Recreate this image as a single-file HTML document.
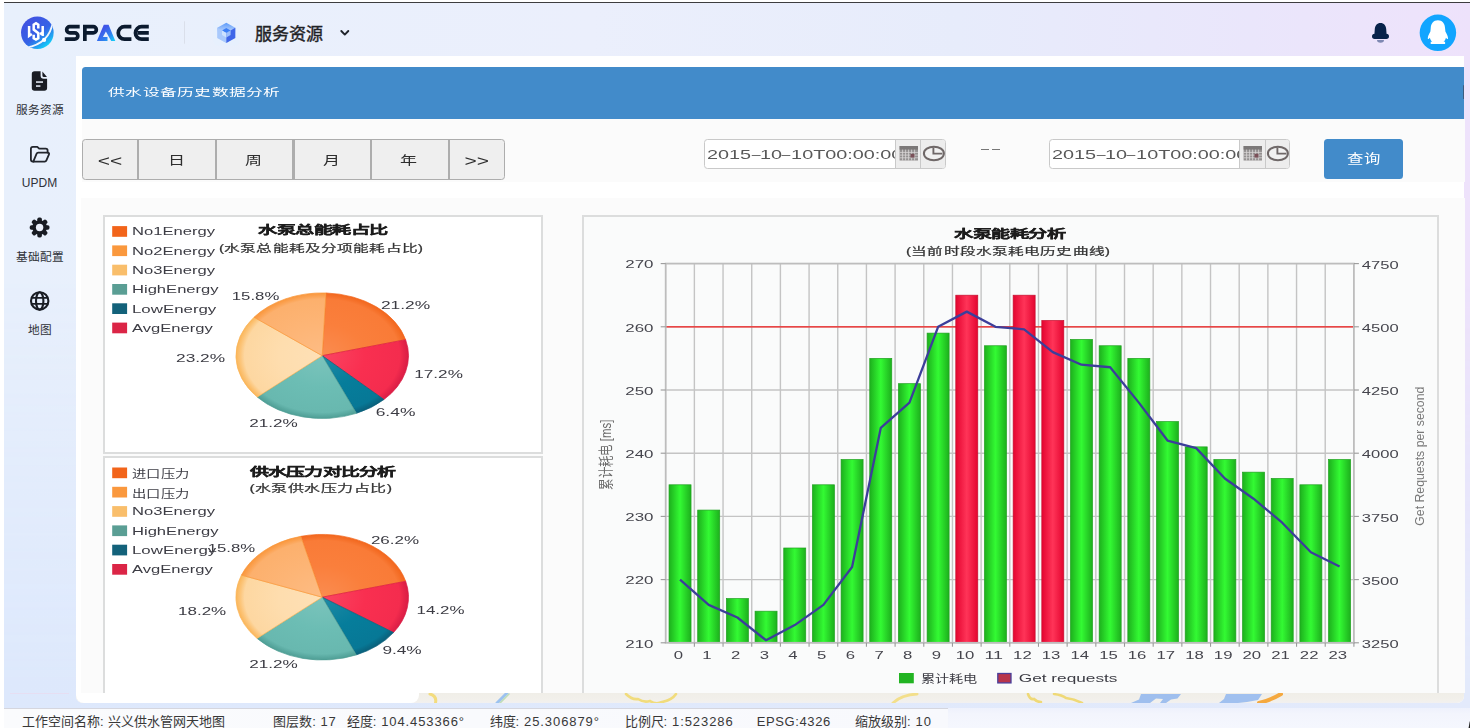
<!DOCTYPE html>
<html lang="zh-CN">
<head>
<meta charset="utf-8">
<title>SPACE - 供水设备历史数据分析</title>
<style>
html,body{margin:0;padding:0;}
body{width:1474px;height:728px;overflow:hidden;background:#fff;position:relative;font-family:"Liberation Sans",sans-serif;color:#333;}
.abs{position:absolute;}
#app{position:absolute;left:4px;top:2px;width:1466px;height:726px;border-top:1px solid #3d3d3f;box-sizing:border-box;
 background:linear-gradient(90deg,#E8F0FC 0%,#EBEFFC 40%,#E7ECFB 65%,#EAE6FB 85%,#EEE2FB 100%);overflow:hidden;}
#sideshade{position:absolute;left:0;top:0;width:1466px;height:726px;background:linear-gradient(90deg,#DDE8FC 0%,#E3EAFB 100%);-webkit-mask-image:linear-gradient(180deg,rgba(0,0,0,0) 38%,rgba(0,0,0,1) 94%);mask-image:linear-gradient(180deg,rgba(0,0,0,0) 38%,rgba(0,0,0,1) 94%);}
/* everything below is positioned in page coordinates inside #page */
#page{position:absolute;left:0;top:0;width:1474px;height:728px;}
.navtxt{position:absolute;font-size:11.7px;line-height:14px;color:#2f3238;text-align:center;width:72px;left:3.5px;white-space:nowrap;}
#hdtitle{position:absolute;left:254.5px;top:23px;font-size:17px;line-height:24px;color:#1f2226;letter-spacing:0.15px;font-weight:500;-webkit-text-stroke:0.4px #1f2226;white-space:nowrap;}
#main{position:absolute;left:76px;top:56px;width:1388.2px;height:647px;background:#fff;border-radius:0 0 7px 7px;overflow:hidden;}
#mapstrip{position:absolute;left:0;top:637.4px;width:1389px;height:9.6px;background:linear-gradient(180deg,#F0EEE8 0%,#F2F0EB 70%,#F1F0F0 100%);}
#layerpanel{position:absolute;left:0;top:630px;width:342.5px;height:17px;background:#fff;border-radius:0 0 8px 8px;}
#bluebar{position:absolute;left:82px;top:66.7px;width:1382px;height:52.2px;background:#428BCA;border-radius:3.5px 0 0 0;}
#bluebar span{position:absolute;left:26px;top:17.8px;font-size:10.7px;line-height:16px;color:#fff;white-space:nowrap;transform:scaleX(1.57);transform-origin:0 50%;}
#toolbar{position:absolute;left:82px;top:118.9px;width:1383px;height:63.1px;background:#FBFBFB;}
#panel{position:absolute;left:80.8px;top:197.8px;width:1384.2px;height:495.4px;background:#FBFBFB;}
#btns{position:absolute;left:82.3px;top:139.3px;width:422.9px;height:40.3px;box-sizing:border-box;border:1.4px solid #ADADAD;border-radius:3.5px;background:#EFEFEF;}
#btns i{position:absolute;top:0;width:2.2px;height:100%;background:#ADADAD;}
#btns b{position:absolute;top:12.3px;font-weight:normal;font-size:12.5px;line-height:16px;color:#2e2e2e;white-space:nowrap;text-align:center;transform:scaleX(1.36);}
#btns b.ar{font-size:15.4px;top:12.6px;}
.inp{position:absolute;top:139px;height:30px;width:241.6px;box-sizing:border-box;border:1.2px solid #C9C9C9;border-radius:3.5px;background:#fff;overflow:hidden;}
.inp .tx{position:absolute;left:2.2px;top:6.2px;font-size:13.3px;line-height:17px;color:#585858;white-space:nowrap;transform:scaleX(1.49);transform-origin:0 50%;}
.dh{display:inline-block;width:6.04px;transform:scaleX(0.8);transform-origin:0 50%;}
.inp .ad{position:absolute;top:0;height:100%;background:#EDEDED;border-left:1.2px solid #C9C9C9;box-sizing:border-box;}
#dash{position:absolute;left:980.9px;top:148.6px;width:19.4px;height:1.2px;}
#dash:before,#dash:after{content:"";position:absolute;top:0;width:8.5px;height:1.2px;background:#777;}
#dash:before{left:0;}#dash:after{right:0;}
#qbtn{position:absolute;left:1324.3px;top:138.9px;width:79.2px;height:40px;background:#428BCA;border-radius:3.5px;}
#qbtn span{position:absolute;left:0;width:100%;top:12.5px;text-align:center;font-size:12.6px;line-height:16px;color:#fff;transform:scaleX(1.3);}
.box{position:absolute;box-sizing:border-box;border:2px solid #DCDDDD;background:#fff;}
#status{position:absolute;left:4px;top:708.3px;width:1466px;height:19.7px;background:linear-gradient(180deg,#EEF1FC 0%,#F3F5FD 30%,#F5F7FE 100%);}
#status i{position:absolute;left:0;top:0;width:944px;height:19.7px;background:linear-gradient(90deg,#FAFBFD,#F8F9FD);border-top:1px solid #D5D6DE;box-sizing:border-box;}
#status span{position:absolute;top:5.9px;font-size:13px;line-height:16px;color:#383838;white-space:nowrap;}
#status span.v{letter-spacing:0.9px;}
svg{position:absolute;left:0;top:0;overflow:visible;}
svg text{font-family:"Liberation Sans",sans-serif;}
#charts{filter:blur(0.4px);}
#bluebar span,#btns b,.inp .tx,#qbtn span{filter:blur(0.3px);}
.ct{font-size:11.8px;fill:#3c3c44;}
.cc{font-size:10.9px;fill:#3c3c44;}
.ax{font-size:11.4px;fill:#45454d;}
.gl{stroke:#C4C4C4;stroke-width:1.4;}
.tk{stroke:#9A9A9A;stroke-width:1.1;}
.tb{font-size:11.4px;font-weight:bold;fill:#1c1c1c;stroke:#1c1c1c;stroke-width:0.3px;}
.ts{font-size:10.7px;fill:#333;stroke:#333;stroke-width:0.22px;}
</style>
</head>
<body>
<div id="app"><div id="sideshade"></div></div>
<div id="page">

<!-- ===== header ===== -->
<svg width="1474" height="60" viewBox="0 0 1474 60">
 <defs>
  <linearGradient id="lg1" x1="0.2" y1="0.15" x2="0.85" y2="0.95">
   <stop offset="0" stop-color="#4054E2"/><stop offset="0.5" stop-color="#3563E6"/><stop offset="0.8" stop-color="#1FA8F2"/><stop offset="1" stop-color="#0BE6FB"/>
  </linearGradient>
  <linearGradient id="lgA" x1="0" y1="0" x2="1" y2="1">
   <stop offset="0.3" stop-color="#3F55E7"/><stop offset="0.65" stop-color="#2F7FEF"/><stop offset="1" stop-color="#12D4F8"/>
  </linearGradient>
  <linearGradient id="cubeTop" x1="0" y1="0" x2="0" y2="1"><stop offset="0" stop-color="#5A9AFA"/><stop offset="0.5" stop-color="#C6DBFD"/><stop offset="1" stop-color="#C6DBFD"/></linearGradient>
  <clipPath id="lc"><circle cx="37.35" cy="32.75" r="16.3"/></clipPath>
 </defs>
 <!-- logo -->
 <circle cx="37.35" cy="32.75" r="16.3" fill="url(#lg1)"/>
 <g clip-path="url(#lc)">
  <path d="M52.9,21.5 Q49.6,43.6 26.5,47.6" fill="none" stroke="#F1F5FD" stroke-width="1.7"/>
 </g>
 <circle cx="44.1" cy="39.9" r="2.1" fill="#fff"/>
 <g fill="none" stroke="#fff" stroke-width="2.5" stroke-linejoin="miter">
  <path d="M29.1,26 V35.8 L31.8,34"/>
  <path d="M42.7,26 V36 M42.7,32.4 L40,34.2"/>
  <path d="M38.3,28.4 V24.7 L36,23.3 L33.7,24.7 V29.6 L38.3,33.2 V38.2 L36,39.6 L33.7,38.2 V34.8"/>
 </g>
 <!-- SPACE word -->
 <g fill="none" stroke="#0B1A2E" stroke-width="3.7">
  <path d="M79.7,26.65 H69.8 a3.125,3.125 0 0 0 0,6.25 H74.7 a3.125,3.125 0 0 1 0,6.25 H64.8"/>
  <path d="M84.85,41 V26.65 H93.2 a3.125,3.125 0 0 1 0,6.25 H84.85"/>
  <path d="M131.4,26.65 H124.5 a6.25,6.25 0 0 0 0,12.5 H131.4"/>
  <path d="M148.8,26.65 H141.7 a6.25,6.25 0 0 0 0,12.5 H148.8 M137.6,32.9 H148.8"/>
 </g>
 <path d="M103.8,24.8 H108.6 L115.3,41 H111.2 L105.9,31.5 L102.9,37.1 H107.5 V41 H96.9 Z" fill="url(#lgA)"/>
 <!-- divider -->
 <rect x="184" y="21.3" width="1" height="22.4" fill="#DADFEA"/>
 <!-- cube icon -->
 <rect x="213.4" y="19.2" width="26.2" height="26.5" rx="5" fill="#E7F0FD"/>
 <path d="M226.3,22.7 L235.3,27.8 V37.9 L226.3,43 L217.3,37.9 V27.8 Z" fill="url(#cubeTop)"/>
 <path d="M217.3,27.8 L226.3,32.9 V43 L217.3,37.9 Z" fill="#A9C9FC"/>
 <path d="M226.3,32.9 L235.3,27.8 V37.9 L226.3,43 Z" fill="#3F66E8"/>
 <path d="M226.3,28 L230.6,30.4 L226.3,32.9 L222,30.4 Z" fill="#3C7FF7"/>
 <path d="M222,30.4 L226.3,32.9 V37.4 L222,35 Z" fill="#CDE2FE"/>
 <path d="M226.3,32.9 L230.6,30.4 V35 L226.3,37.4 Z" fill="#9DBFFB"/>
 <!-- chevron -->
 <path d="M341.3,31 L344.8,34.6 L348.3,31" fill="none" stroke="#20242B" stroke-width="1.9" stroke-linecap="round" stroke-linejoin="round"/>
 <!-- bell -->
 <path d="M1380.5,22.9 c3.5,0 5.5,2.6 5.7,6.2 l0.35,4.6 h-0.2 a2.65,2.65 0 0 1 0,5.3 h-11.7 a2.65,2.65 0 0 1 0,-5.3 h-0.2 l0.35,-4.6 c0.2,-3.6 2.2,-6.2 5.7,-6.2 z" fill="#08234A"/>
 <path d="M1377,40.1 h7 a3.5,2.6 0 0 1 -7,0 z" fill="#7E88B2"/>
 <!-- avatar -->
 <circle cx="1437.9" cy="32.85" r="18.25" fill="#12A5FF"/>
 <path d="M1437.9,20.3 c4.4,0 7,3.3 7.2,8.2 l0.3,3 c1.5,2.6 2.7,5.2 2.6,7 c-0.1,1 -0.9,0.6 -2.1,-0.8 c-0.3,1.7 -1.2,3 -2.3,4 h1.5 v2.2 h-14.4 v-2.2 h1.5 c-1.1,-1 -2,-2.3 -2.3,-4 c-1.2,1.4 -2,1.8 -2.1,0.8 c-0.1,-1.8 1.1,-4.4 2.6,-7 l0.3,-3 c0.2,-4.9 2.8,-8.2 7.2,-8.2 z" fill="#fff"/>
</svg>
<div id="hdtitle">服务资源</div>

<!-- ===== sidebar ===== -->
<svg width="80" height="340" viewBox="0 0 80 340">
 <!-- file icon -->
 <path d="M34.6,71.3 H40.6 V75.6 a3.2,3.2 0 0 0 3.2,3.2 H47.1 V88 a2.8,2.8 0 0 1 -2.8,2.8 H34.6 a2.8,2.8 0 0 1 -2.8,-2.8 V74.1 a2.8,2.8 0 0 1 2.8,-2.8 Z" fill="#191C23"/>
 <path d="M42.4,71.5 L47,76.9 H43.9 a1.5,1.5 0 0 1 -1.5,-1.5 Z" fill="#191C23"/>
 <rect x="36" y="81.3" width="7" height="1.5" fill="#EAF0FB"/>
 <rect x="36" y="85.3" width="4.4" height="1.5" fill="#EAF0FB"/>
 <!-- folder icon -->
 <g fill="none" stroke="#22252C" stroke-width="1.8" stroke-linejoin="round" stroke-linecap="round">
  <path d="M33.6,161.6 H32.9 a2,2 0 0 1 -2,-2 V148.8 a2,2 0 0 1 2,-2 H37.3 L39.2,148.7 H45.8 a1.8,1.8 0 0 1 1.8,1.8 V152.6"/>
  <path d="M33.3,161.6 L36.5,153.9 a1.9,1.9 0 0 1 1.7,-1.2 H48 a1.1,1.1 0 0 1 1,1.6 L46.4,160.4 a1.9,1.9 0 0 1 -1.7,1.2 Z"/>
 </g>
 <!-- gear icon -->
 <g transform="translate(39.6,227.5)" fill="#191C23">
  <circle r="7.3"/>
  <g id="teeth">
   <rect x="-2.3" y="-9.9" width="4.6" height="19.8" rx="1.7"/>
   <rect x="-2.3" y="-9.9" width="4.6" height="19.8" rx="1.7" transform="rotate(45)"/>
   <rect x="-2.3" y="-9.9" width="4.6" height="19.8" rx="1.7" transform="rotate(90)"/>
   <rect x="-2.3" y="-9.9" width="4.6" height="19.8" rx="1.7" transform="rotate(135)"/>
  </g>
  <circle r="3.7" fill="#EBF0FB"/>
 </g>
 <!-- globe icon -->
 <g transform="translate(39.7,300.9)" fill="none" stroke="#191C23" stroke-width="2.1">
  <circle r="8.7"/>
  <ellipse rx="3.7" ry="8.7"/>
  <path d="M-8.2,-3 H8.2 M-8.2,3 H8.2" stroke-width="1.9"/>
 </g>
</svg>
<div class="navtxt" style="top:103.3px;">服务资源</div>
<div class="navtxt" style="top:175.6px;font-size:12px;">UPDM</div>
<div class="navtxt" style="top:249.9px;">基础配置</div>
<div class="navtxt" style="top:323.4px;">地图</div>

<div class="abs" style="left:10px;top:692.6px;width:59px;height:1px;background:#E6DEF2;"></div>
<!-- ===== main panel ===== -->
<div id="main">
 <div id="mapstrip"></div>
 <svg width="1389" height="647" viewBox="76 56 1389 647">
  <g fill="none" stroke-linecap="round">
   <path d="M430,694 q7,2 5.5,9" stroke="#F3DC7E" stroke-width="3"/>
   <path d="M497,703 l10,-10" stroke="#9CC2F0" stroke-width="3"/><path d="M500,703 l9,-9" stroke="#BFDDB8" stroke-width="1.6"/>
   <path d="M626,694 q6,6 12,5 q6,4 12,2 q6,4 12,1 q10,-2 14,-8" stroke="#F1DC7C" stroke-width="2.6"/>
   <path d="M893,703 q8,-8 24,-9" stroke="#F3DF8B" stroke-width="3"/>
   <path d="M1028,694 q2,6 6,5 q3,3 7,3 M1054,694 q8,1 12,4 q8,1 16,5" stroke="#EFD977" stroke-width="2.6"/>
   <path d="M1259,703 q12,-3 22,-9" stroke="#F5A93F" stroke-width="4"/>
  </g>
  <path d="M1131,703 L1139,699.5 L1141,694 H1181 L1177.5,698.5 L1171,699.5 L1166,703 Z M1150,703 L1156,698.5 L1163,699 L1160,703 Z" fill="#9FBFEE" fill-rule="evenodd"/><path d="M1226,694 H1262 L1258,700 L1247,702 L1238,703 H1219 L1224,699 Z" fill="#A0C0EF"/>
 </svg>
 <div id="layerpanel"></div>
</div>
<div id="bluebar"><span>供水设备历史数据分析</span></div>
<div class="abs" style="left:1462.6px;top:85.4px;width:1.5px;height:14px;background:#3C5C80;border-radius:1px;"></div>
<div id="toolbar"></div>
<div class="abs" style="left:1463.6px;top:351px;width:1.6px;height:8px;background:#F3A650;"></div><div class="abs" style="left:1463.6px;top:359px;width:1.6px;height:8.5px;background:#6B5CE3;"></div>
<div id="btns">
 <i style="left:53.6px"></i><i style="left:131.5px"></i><i style="left:209.1px"></i><i style="left:286.7px"></i><i style="left:364.5px"></i>
 <b class="ar" style="left:-0.5px;width:54px;">&lt;&lt;</b>
 <b style="left:54.5px;width:77px;">日</b>
 <b style="left:133px;width:76.5px;">周</b>
 <b style="left:210.5px;width:76.5px;">月</b>
 <b style="left:288px;width:76.5px;">年</b>
 <b class="ar" style="left:366.5px;width:53.5px;">&gt;&gt;</b>
</div>
<div class="inp" style="left:704px;">
 <span class="tx">2015<span class="dh">–</span>10<span class="dh">–</span>10T00:00:00</span>
 <div class="ad" style="left:189.6px;width:50.8px;"></div>
 <div class="ad" style="left:215.2px;width:25.2px;"></div>
 <svg width="52" height="28" viewBox="0 0 52 28" style="left:189.6px;top:0;">
  <rect x="4.6" y="6" width="18.4" height="14.5" fill="#939090"/><rect x="4.6" y="6" width="18.4" height="3.6" fill="#7b7878"/>
  <path d="M4.6,12.4 H23 M4.6,15.1 H23 M4.6,17.8 H23 M7.6,9.6 V20.5 M10.6,9.6 V20.5 M13.6,9.6 V20.5 M16.6,9.6 V20.5 M19.6,9.6 V20.5" stroke="#d9d7d7" stroke-width="0.8"/>
  <rect x="15.5" y="13.8" width="4" height="3.8" fill="#7a5058"/>
  <ellipse cx="38.9" cy="13.5" rx="10" ry="6.8" fill="#f1f1f1" stroke="#6f6868" stroke-width="2"/>
  <path d="M38.4,7.4 V13.6 H47.4" fill="none" stroke="#6f6868" stroke-width="1.9"/>
 </svg>
</div>
<div id="dash"></div>
<div class="inp" style="left:1048.6px;">
 <span class="tx">2015<span class="dh">–</span>10<span class="dh">–</span>10T00:00:00</span>
 <div class="ad" style="left:189.6px;width:50.8px;"></div>
 <div class="ad" style="left:215.2px;width:25.2px;"></div>
 <svg width="52" height="28" viewBox="0 0 52 28" style="left:189.6px;top:0;">
  <rect x="4.6" y="6" width="18.4" height="14.5" fill="#939090"/><rect x="4.6" y="6" width="18.4" height="3.6" fill="#7b7878"/>
  <path d="M4.6,12.4 H23 M4.6,15.1 H23 M4.6,17.8 H23 M7.6,9.6 V20.5 M10.6,9.6 V20.5 M13.6,9.6 V20.5 M16.6,9.6 V20.5 M19.6,9.6 V20.5" stroke="#d9d7d7" stroke-width="0.8"/>
  <rect x="15.5" y="13.8" width="4" height="3.8" fill="#7a5058"/>
  <ellipse cx="38.9" cy="13.5" rx="10" ry="6.8" fill="#f1f1f1" stroke="#6f6868" stroke-width="2"/>
  <path d="M38.4,7.4 V13.6 H47.4" fill="none" stroke="#6f6868" stroke-width="1.9"/>
 </svg>
</div>
<div id="qbtn"><span>查询</span></div>

<div id="panel"></div>
<div class="box" style="left:102.9px;top:214.5px;width:440.4px;height:239.4px;"></div>
<div class="box" style="left:102.9px;top:456.1px;width:440.4px;height:237.3px;border-bottom:none;"></div>
<div class="box" style="left:582px;top:214.5px;width:856.6px;height:478.9px;background:#FAFBFB;border-bottom:none;"></div>

<!-- ===== charts ===== -->
<svg id="charts" width="1474" height="728" viewBox="0 0 1474 728">
 <defs>
  <radialGradient id="pg" cx="0.5" cy="0.5" r="0.5">
   <stop offset="0" stop-color="#fff" stop-opacity="0.16"/>
   <stop offset="0.55" stop-color="#fff" stop-opacity="0.06"/>
   <stop offset="0.86" stop-color="#fff" stop-opacity="0"/>
   <stop offset="0.93" stop-color="#7a3a00" stop-opacity="0.10"/>
   <stop offset="1" stop-color="#7a3a00" stop-opacity="0.20"/>
  </radialGradient>
  <linearGradient id="gg" x1="0" y1="0" x2="1" y2="0">
   <stop offset="0" stop-color="#1DB01D"/><stop offset="0.5" stop-color="#33FA33"/><stop offset="1" stop-color="#1DB01D"/>
  </linearGradient>
  <linearGradient id="rg" x1="0" y1="0" x2="1" y2="0">
   <stop offset="0" stop-color="#E40530"/><stop offset="0.5" stop-color="#FF3458"/><stop offset="1" stop-color="#E40530"/>
  </linearGradient>
 </defs>
 <!-- pie chart 1 -->
 <text x="258" y="234.4" textLength="129.5" lengthAdjust="spacingAndGlyphs" class="tb">水泵总能耗占比</text>
 <text x="219" y="251.8" textLength="204" lengthAdjust="spacingAndGlyphs" class="ts">(水泵总能耗及分项能耗占比)</text>
<rect x="112.2" y="226.1" width="14.9" height="10.7" fill="#F2641A"/>
<text x="132" y="235.3" textLength="83" lengthAdjust="spacingAndGlyphs" class="ct">No1Energy</text>
<rect x="112.2" y="245.4" width="14.9" height="10.7" fill="#FA983D"/>
<text x="132" y="254.6" textLength="83" lengthAdjust="spacingAndGlyphs" class="ct">No2Energy</text>
<rect x="112.2" y="264.7" width="14.9" height="10.7" fill="#F9BE6B"/>
<text x="132" y="273.9" textLength="83" lengthAdjust="spacingAndGlyphs" class="ct">No3Energy</text>
<rect x="112.2" y="284" width="14.9" height="10.7" fill="#5A9E94"/>
<text x="132" y="293.2" textLength="86.6" lengthAdjust="spacingAndGlyphs" class="ct">HighEnergy</text>
<rect x="112.2" y="303.3" width="14.9" height="10.7" fill="#13627A"/>
<text x="132" y="312.5" textLength="84.3" lengthAdjust="spacingAndGlyphs" class="ct">LowEnergy</text>
<rect x="112.2" y="322.6" width="14.9" height="10.7" fill="#DB2546"/>
<text x="132" y="331.8" textLength="80.8" lengthAdjust="spacingAndGlyphs" class="ct">AvgEnergy</text>
<defs>
<radialGradient id="pa0" gradientUnits="userSpaceOnUse" cx="322.2" cy="355.7" r="86.3" gradientTransform="translate(322.2,355.7) scale(1,0.73) translate(-322.2,-355.7)"><stop offset="0" stop-color="#FA8C50"/><stop offset="0.5" stop-color="#FA7F3C"/><stop offset="0.9" stop-color="#F97B37"/><stop offset="0.95" stop-color="#F57029"/><stop offset="1" stop-color="#F2661C"/></radialGradient>
<radialGradient id="pa1" gradientUnits="userSpaceOnUse" cx="322.2" cy="355.7" r="86.3" gradientTransform="translate(322.2,355.7) scale(1,0.73) translate(-322.2,-355.7)"><stop offset="0" stop-color="#FA4462"/><stop offset="0.5" stop-color="#F92F50"/><stop offset="0.9" stop-color="#F42C4E"/><stop offset="0.95" stop-color="#E62449"/><stop offset="1" stop-color="#DA1D45"/></radialGradient>
<radialGradient id="pa2" gradientUnits="userSpaceOnUse" cx="322.2" cy="355.7" r="86.3" gradientTransform="translate(322.2,355.7) scale(1,0.73) translate(-322.2,-355.7)"><stop offset="0" stop-color="#1F8AA5"/><stop offset="0.5" stop-color="#067D9B"/><stop offset="0.9" stop-color="#077896"/><stop offset="0.95" stop-color="#086B87"/><stop offset="1" stop-color="#0A5F7A"/></radialGradient>
<radialGradient id="pa3" gradientUnits="userSpaceOnUse" cx="322.2" cy="355.7" r="86.3" gradientTransform="translate(322.2,355.7) scale(1,0.73) translate(-322.2,-355.7)"><stop offset="0" stop-color="#7BC4BC"/><stop offset="0.5" stop-color="#6CBDB4"/><stop offset="0.9" stop-color="#68B8AF"/><stop offset="0.95" stop-color="#5AAAA1"/><stop offset="1" stop-color="#4E9D94"/></radialGradient>
<radialGradient id="pa4" gradientUnits="userSpaceOnUse" cx="322.2" cy="355.7" r="86.3" gradientTransform="translate(322.2,355.7) scale(1,0.73) translate(-322.2,-355.7)"><stop offset="0" stop-color="#FEE0B6"/><stop offset="0.5" stop-color="#FEDDAE"/><stop offset="0.9" stop-color="#FDD7A1"/><stop offset="0.95" stop-color="#FCC57A"/><stop offset="1" stop-color="#FAB558"/></radialGradient>
<radialGradient id="pa5" gradientUnits="userSpaceOnUse" cx="322.2" cy="355.7" r="86.3" gradientTransform="translate(322.2,355.7) scale(1,0.73) translate(-322.2,-355.7)"><stop offset="0" stop-color="#FDBC84"/><stop offset="0.5" stop-color="#FDB576"/><stop offset="0.9" stop-color="#FCB06D"/><stop offset="0.95" stop-color="#FBA252"/><stop offset="1" stop-color="#F9963A"/></radialGradient>
</defs>
<path d="M322.2,355.7 L325.96,292.96 A86.3,62.8 0 0 1 405.64,339.66 Z" fill="url(#pa0)" stroke="#F2661C" stroke-width="0.7" stroke-linejoin="round"/>
<path d="M322.2,355.7 L405.64,339.66 A86.3,62.8 0 0 1 383.96,399.56 Z" fill="url(#pa1)" stroke="#DA1D45" stroke-width="0.7" stroke-linejoin="round"/>
<path d="M322.2,355.7 L383.96,399.56 A86.3,62.8 0 0 1 356.47,413.33 Z" fill="url(#pa2)" stroke="#0A5F7A" stroke-width="0.7" stroke-linejoin="round"/>
<path d="M322.2,355.7 L356.47,413.33 A86.3,62.8 0 0 1 257.27,397.07 Z" fill="url(#pa3)" stroke="#4E9D94" stroke-width="0.7" stroke-linejoin="round"/>
<path d="M322.2,355.7 L257.27,397.07 A86.3,62.8 0 0 1 254.01,317.21 Z" fill="url(#pa4)" stroke="#FAB558" stroke-width="0.7" stroke-linejoin="round"/>
<path d="M322.2,355.7 L254.01,317.21 A86.3,62.8 0 0 1 325.96,292.96 Z" fill="url(#pa5)" stroke="#F9963A" stroke-width="0.7" stroke-linejoin="round"/>
<text x="380.9" y="308.5" textLength="49.3" lengthAdjust="spacingAndGlyphs" class="ct">21.2%</text>
<text x="414.3" y="377.9" textLength="48.6" lengthAdjust="spacingAndGlyphs" class="ct">17.2%</text>
<text x="375.7" y="416.1" textLength="39.7" lengthAdjust="spacingAndGlyphs" class="ct">6.4%</text>
<text x="249.2" y="426.9" textLength="48.6" lengthAdjust="spacingAndGlyphs" class="ct">21.2%</text>
<text x="176.1" y="362" textLength="49" lengthAdjust="spacingAndGlyphs" class="ct">23.2%</text>
<text x="231.8" y="299.6" textLength="47.5" lengthAdjust="spacingAndGlyphs" class="ct">15.8%</text>
 <!-- pie chart 2 -->
 <text x="249.6" y="476.2" textLength="146" lengthAdjust="spacingAndGlyphs" class="tb">供水压力对比分析</text>
 <text x="249.6" y="492.2" textLength="142.4" lengthAdjust="spacingAndGlyphs" class="ts">(水泵供水压力占比)</text>
<rect x="112.2" y="467.5" width="14.9" height="10.7" fill="#F2641A"/>
<text x="132" y="478.4" textLength="57.7" lengthAdjust="spacingAndGlyphs" class="cc">进口压力</text>
<rect x="112.2" y="486.8" width="14.9" height="10.7" fill="#FA983D"/>
<text x="132" y="497.7" textLength="57.7" lengthAdjust="spacingAndGlyphs" class="cc">出口压力</text>
<rect x="112.2" y="506.1" width="14.9" height="10.7" fill="#F9BE6B"/>
<text x="132" y="515.3" textLength="83" lengthAdjust="spacingAndGlyphs" class="ct">No3Energy</text>
<rect x="112.2" y="525.4" width="14.9" height="10.7" fill="#5A9E94"/>
<text x="132" y="534.6" textLength="86.6" lengthAdjust="spacingAndGlyphs" class="ct">HighEnergy</text>
<rect x="112.2" y="544.7" width="14.9" height="10.7" fill="#13627A"/>
<text x="132" y="553.9" textLength="84.3" lengthAdjust="spacingAndGlyphs" class="ct">LowEnergy</text>
<rect x="112.2" y="564" width="14.9" height="10.7" fill="#DB2546"/>
<text x="132" y="573.2" textLength="80.8" lengthAdjust="spacingAndGlyphs" class="ct">AvgEnergy</text>
<defs>
<radialGradient id="pb0" gradientUnits="userSpaceOnUse" cx="322.2" cy="597.2" r="86.3" gradientTransform="translate(322.2,597.2) scale(1,0.73) translate(-322.2,-597.2)"><stop offset="0" stop-color="#FA8C50"/><stop offset="0.5" stop-color="#FA7F3C"/><stop offset="0.9" stop-color="#F97B37"/><stop offset="0.95" stop-color="#F57029"/><stop offset="1" stop-color="#F2661C"/></radialGradient>
<radialGradient id="pb1" gradientUnits="userSpaceOnUse" cx="322.2" cy="597.2" r="86.3" gradientTransform="translate(322.2,597.2) scale(1,0.73) translate(-322.2,-597.2)"><stop offset="0" stop-color="#FA4462"/><stop offset="0.5" stop-color="#F92F50"/><stop offset="0.9" stop-color="#F42C4E"/><stop offset="0.95" stop-color="#E62449"/><stop offset="1" stop-color="#DA1D45"/></radialGradient>
<radialGradient id="pb2" gradientUnits="userSpaceOnUse" cx="322.2" cy="597.2" r="86.3" gradientTransform="translate(322.2,597.2) scale(1,0.73) translate(-322.2,-597.2)"><stop offset="0" stop-color="#1F8AA5"/><stop offset="0.5" stop-color="#067D9B"/><stop offset="0.9" stop-color="#077896"/><stop offset="0.95" stop-color="#086B87"/><stop offset="1" stop-color="#0A5F7A"/></radialGradient>
<radialGradient id="pb3" gradientUnits="userSpaceOnUse" cx="322.2" cy="597.2" r="86.3" gradientTransform="translate(322.2,597.2) scale(1,0.73) translate(-322.2,-597.2)"><stop offset="0" stop-color="#7BC4BC"/><stop offset="0.5" stop-color="#6CBDB4"/><stop offset="0.9" stop-color="#68B8AF"/><stop offset="0.95" stop-color="#5AAAA1"/><stop offset="1" stop-color="#4E9D94"/></radialGradient>
<radialGradient id="pb4" gradientUnits="userSpaceOnUse" cx="322.2" cy="597.2" r="86.3" gradientTransform="translate(322.2,597.2) scale(1,0.73) translate(-322.2,-597.2)"><stop offset="0" stop-color="#FEE0B6"/><stop offset="0.5" stop-color="#FEDDAE"/><stop offset="0.9" stop-color="#FDD7A1"/><stop offset="0.95" stop-color="#FCC57A"/><stop offset="1" stop-color="#FAB558"/></radialGradient>
<radialGradient id="pb5" gradientUnits="userSpaceOnUse" cx="322.2" cy="597.2" r="86.3" gradientTransform="translate(322.2,597.2) scale(1,0.73) translate(-322.2,-597.2)"><stop offset="0" stop-color="#FDBC84"/><stop offset="0.5" stop-color="#FDB576"/><stop offset="0.9" stop-color="#FCB06D"/><stop offset="0.95" stop-color="#FBA252"/><stop offset="1" stop-color="#F9963A"/></radialGradient>
</defs>
<path d="M322.2,597.2 L300.74,536.37 A86.3,62.8 0 0 1 405.68,581.26 Z" fill="url(#pb0)" stroke="#F2661C" stroke-width="0.7" stroke-linejoin="round"/>
<path d="M322.2,597.2 L405.68,581.26 A86.3,62.8 0 0 1 393.49,632.59 Z" fill="url(#pb1)" stroke="#DA1D45" stroke-width="0.7" stroke-linejoin="round"/>
<path d="M322.2,597.2 L393.49,632.59 A86.3,62.8 0 0 1 356.34,654.88 Z" fill="url(#pb2)" stroke="#0A5F7A" stroke-width="0.7" stroke-linejoin="round"/>
<path d="M322.2,597.2 L356.34,654.88 A86.3,62.8 0 0 1 257.07,638.4 Z" fill="url(#pb3)" stroke="#4E9D94" stroke-width="0.7" stroke-linejoin="round"/>
<path d="M322.2,597.2 L257.07,638.4 A86.3,62.8 0 0 1 241.42,575.1 Z" fill="url(#pb4)" stroke="#FAB558" stroke-width="0.7" stroke-linejoin="round"/>
<path d="M322.2,597.2 L241.42,575.1 A86.3,62.8 0 0 1 300.74,536.37 Z" fill="url(#pb5)" stroke="#F9963A" stroke-width="0.7" stroke-linejoin="round"/>
<text x="370.9" y="544.1" textLength="48.2" lengthAdjust="spacingAndGlyphs" class="ct">26.2%</text>
<text x="416.5" y="613.8" textLength="47.9" lengthAdjust="spacingAndGlyphs" class="ct">14.2%</text>
<text x="382.4" y="653.9" textLength="39.3" lengthAdjust="spacingAndGlyphs" class="ct">9.4%</text>
<text x="249.2" y="668.3" textLength="48.6" lengthAdjust="spacingAndGlyphs" class="ct">21.2%</text>
<text x="178" y="614.6" textLength="48.2" lengthAdjust="spacingAndGlyphs" class="ct">18.2%</text>
<text x="207.7" y="552.2" textLength="47.5" lengthAdjust="spacingAndGlyphs" class="ct">15.8%</text>
 <!-- bar chart -->
 
 <text x="954" y="238.3" textLength="111.2" lengthAdjust="spacingAndGlyphs" class="tb">水泵能耗分析</text>
 <text x="906.1" y="255.4" textLength="204" lengthAdjust="spacingAndGlyphs" class="ts">(当前时段水泵耗电历史曲线)</text>
<line x1="694.38" y1="263.6" x2="694.38" y2="642.8" class="gl"/>
<line x1="723.05" y1="263.6" x2="723.05" y2="642.8" class="gl"/>
<line x1="751.73" y1="263.6" x2="751.73" y2="642.8" class="gl"/>
<line x1="780.4" y1="263.6" x2="780.4" y2="642.8" class="gl"/>
<line x1="809.08" y1="263.6" x2="809.08" y2="642.8" class="gl"/>
<line x1="837.75" y1="263.6" x2="837.75" y2="642.8" class="gl"/>
<line x1="866.43" y1="263.6" x2="866.43" y2="642.8" class="gl"/>
<line x1="895.1" y1="263.6" x2="895.1" y2="642.8" class="gl"/>
<line x1="923.78" y1="263.6" x2="923.78" y2="642.8" class="gl"/>
<line x1="952.45" y1="263.6" x2="952.45" y2="642.8" class="gl"/>
<line x1="981.12" y1="263.6" x2="981.12" y2="642.8" class="gl"/>
<line x1="1009.8" y1="263.6" x2="1009.8" y2="642.8" class="gl"/>
<line x1="1038.48" y1="263.6" x2="1038.48" y2="642.8" class="gl"/>
<line x1="1067.15" y1="263.6" x2="1067.15" y2="642.8" class="gl"/>
<line x1="1095.83" y1="263.6" x2="1095.83" y2="642.8" class="gl"/>
<line x1="1124.5" y1="263.6" x2="1124.5" y2="642.8" class="gl"/>
<line x1="1153.18" y1="263.6" x2="1153.18" y2="642.8" class="gl"/>
<line x1="1181.85" y1="263.6" x2="1181.85" y2="642.8" class="gl"/>
<line x1="1210.53" y1="263.6" x2="1210.53" y2="642.8" class="gl"/>
<line x1="1239.2" y1="263.6" x2="1239.2" y2="642.8" class="gl"/>
<line x1="1267.88" y1="263.6" x2="1267.88" y2="642.8" class="gl"/>
<line x1="1296.55" y1="263.6" x2="1296.55" y2="642.8" class="gl"/>
<line x1="1325.22" y1="263.6" x2="1325.22" y2="642.8" class="gl"/>
<line x1="665.7" y1="579.6" x2="1353.9" y2="579.6" class="gl"/>
<line x1="665.7" y1="516.4" x2="1353.9" y2="516.4" class="gl"/>
<line x1="665.7" y1="453.2" x2="1353.9" y2="453.2" class="gl"/>
<line x1="665.7" y1="390" x2="1353.9" y2="390" class="gl"/>
<line x1="665.7" y1="326.8" x2="1353.9" y2="326.8" class="gl"/>
<line x1="665.7" y1="326.8" x2="1353.9" y2="326.8" stroke="#F51C1C" stroke-width="1.15"/>
<rect x="669.04" y="484.8" width="22" height="158" fill="url(#gg)" stroke="#1FA01F" stroke-width="0.7"/>
<rect x="697.71" y="510.08" width="22" height="132.72" fill="url(#gg)" stroke="#1FA01F" stroke-width="0.7"/>
<rect x="726.39" y="598.56" width="22" height="44.24" fill="url(#gg)" stroke="#1FA01F" stroke-width="0.7"/>
<rect x="755.06" y="611.2" width="22" height="31.6" fill="url(#gg)" stroke="#1FA01F" stroke-width="0.7"/>
<rect x="783.74" y="548" width="22" height="94.8" fill="url(#gg)" stroke="#1FA01F" stroke-width="0.7"/>
<rect x="812.41" y="484.8" width="22" height="158" fill="url(#gg)" stroke="#1FA01F" stroke-width="0.7"/>
<rect x="841.09" y="459.52" width="22" height="183.28" fill="url(#gg)" stroke="#1FA01F" stroke-width="0.7"/>
<rect x="869.76" y="358.4" width="22" height="284.4" fill="url(#gg)" stroke="#1FA01F" stroke-width="0.7"/>
<rect x="898.44" y="383.68" width="22" height="259.12" fill="url(#gg)" stroke="#1FA01F" stroke-width="0.7"/>
<rect x="927.11" y="333.12" width="22" height="309.68" fill="url(#gg)" stroke="#1FA01F" stroke-width="0.7"/>
<rect x="955.79" y="295.2" width="22" height="347.6" fill="url(#rg)" stroke="#C4102F" stroke-width="0.7"/>
<rect x="984.46" y="345.76" width="22" height="297.04" fill="url(#gg)" stroke="#1FA01F" stroke-width="0.7"/>
<rect x="1013.14" y="295.2" width="22" height="347.6" fill="url(#rg)" stroke="#C4102F" stroke-width="0.7"/>
<rect x="1041.81" y="320.48" width="22" height="322.32" fill="url(#rg)" stroke="#C4102F" stroke-width="0.7"/>
<rect x="1070.49" y="339.44" width="22" height="303.36" fill="url(#gg)" stroke="#1FA01F" stroke-width="0.7"/>
<rect x="1099.16" y="345.76" width="22" height="297.04" fill="url(#gg)" stroke="#1FA01F" stroke-width="0.7"/>
<rect x="1127.84" y="358.4" width="22" height="284.4" fill="url(#gg)" stroke="#1FA01F" stroke-width="0.7"/>
<rect x="1156.51" y="421.6" width="22" height="221.2" fill="url(#gg)" stroke="#1FA01F" stroke-width="0.7"/>
<rect x="1185.19" y="446.88" width="22" height="195.92" fill="url(#gg)" stroke="#1FA01F" stroke-width="0.7"/>
<rect x="1213.86" y="459.52" width="22" height="183.28" fill="url(#gg)" stroke="#1FA01F" stroke-width="0.7"/>
<rect x="1242.54" y="472.16" width="22" height="170.64" fill="url(#gg)" stroke="#1FA01F" stroke-width="0.7"/>
<rect x="1271.21" y="478.48" width="22" height="164.32" fill="url(#gg)" stroke="#1FA01F" stroke-width="0.7"/>
<rect x="1299.89" y="484.8" width="22" height="158" fill="url(#gg)" stroke="#1FA01F" stroke-width="0.7"/>
<rect x="1328.56" y="459.52" width="22" height="183.28" fill="url(#gg)" stroke="#1FA01F" stroke-width="0.7"/>
<rect x="665.7" y="263.6" width="688.2" height="379.2" fill="none" stroke="#BDBDBD" stroke-width="1.8"/>
<polyline points="680.04,579.6 708.71,604.88 737.39,617.52 766.06,640.27 794.74,625.1 823.41,604.88 852.09,566.96 880.76,427.92 909.44,402.64 938.11,326.8 966.79,311.63 995.46,326.8 1024.14,329.33 1052.81,352.08 1081.49,364.72 1110.16,367.25 1138.84,402.64 1167.51,440.56 1196.19,448.14 1224.86,478.48 1253.54,498.7 1282.21,522.72 1310.89,552.3 1339.56,566.45" fill="none" stroke="#3C3E9A" stroke-width="2.3" stroke-linejoin="round"/>
<line x1="660.7" y1="642.8" x2="665.7" y2="642.8" class="tk"/>
<text x="625.3" y="647.5" textLength="28.2" lengthAdjust="spacingAndGlyphs" class="ax">210</text>
<line x1="660.7" y1="579.6" x2="665.7" y2="579.6" class="tk"/>
<text x="625.3" y="584.3" textLength="28.2" lengthAdjust="spacingAndGlyphs" class="ax">220</text>
<line x1="660.7" y1="516.4" x2="665.7" y2="516.4" class="tk"/>
<text x="625.3" y="521.1" textLength="28.2" lengthAdjust="spacingAndGlyphs" class="ax">230</text>
<line x1="660.7" y1="453.2" x2="665.7" y2="453.2" class="tk"/>
<text x="625.3" y="457.9" textLength="28.2" lengthAdjust="spacingAndGlyphs" class="ax">240</text>
<line x1="660.7" y1="390" x2="665.7" y2="390" class="tk"/>
<text x="625.3" y="394.7" textLength="28.2" lengthAdjust="spacingAndGlyphs" class="ax">250</text>
<line x1="660.7" y1="326.8" x2="665.7" y2="326.8" class="tk"/>
<text x="625.3" y="331.5" textLength="28.2" lengthAdjust="spacingAndGlyphs" class="ax">260</text>
<line x1="660.7" y1="263.6" x2="665.7" y2="263.6" class="tk"/>
<text x="625.3" y="268.3" textLength="28.2" lengthAdjust="spacingAndGlyphs" class="ax">270</text>
<line x1="1353.9" y1="642.8" x2="1358.9" y2="642.8" class="tk"/>
<text x="1361.8" y="648" textLength="36.8" lengthAdjust="spacingAndGlyphs" class="ax">3250</text>
<line x1="1353.9" y1="579.6" x2="1358.9" y2="579.6" class="tk"/>
<text x="1361.8" y="584.8" textLength="36.8" lengthAdjust="spacingAndGlyphs" class="ax">3500</text>
<line x1="1353.9" y1="516.4" x2="1358.9" y2="516.4" class="tk"/>
<text x="1361.8" y="521.6" textLength="36.8" lengthAdjust="spacingAndGlyphs" class="ax">3750</text>
<line x1="1353.9" y1="453.2" x2="1358.9" y2="453.2" class="tk"/>
<text x="1361.8" y="458.4" textLength="36.8" lengthAdjust="spacingAndGlyphs" class="ax">4000</text>
<line x1="1353.9" y1="390" x2="1358.9" y2="390" class="tk"/>
<text x="1361.8" y="395.2" textLength="36.8" lengthAdjust="spacingAndGlyphs" class="ax">4250</text>
<line x1="1353.9" y1="326.8" x2="1358.9" y2="326.8" class="tk"/>
<text x="1361.8" y="332" textLength="36.8" lengthAdjust="spacingAndGlyphs" class="ax">4500</text>
<line x1="1353.9" y1="263.6" x2="1358.9" y2="263.6" class="tk"/>
<text x="1361.8" y="268.8" textLength="36.8" lengthAdjust="spacingAndGlyphs" class="ax">4750</text>
<line x1="694.38" y1="642.8" x2="694.38" y2="646.8" class="tk"/>
<text x="673.69" y="658.6" textLength="9.3" lengthAdjust="spacingAndGlyphs" class="ax">0</text>
<line x1="723.05" y1="642.8" x2="723.05" y2="646.8" class="tk"/>
<text x="702.36" y="658.6" textLength="9.3" lengthAdjust="spacingAndGlyphs" class="ax">1</text>
<line x1="751.73" y1="642.8" x2="751.73" y2="646.8" class="tk"/>
<text x="731.04" y="658.6" textLength="9.3" lengthAdjust="spacingAndGlyphs" class="ax">2</text>
<line x1="780.4" y1="642.8" x2="780.4" y2="646.8" class="tk"/>
<text x="759.71" y="658.6" textLength="9.3" lengthAdjust="spacingAndGlyphs" class="ax">3</text>
<line x1="809.08" y1="642.8" x2="809.08" y2="646.8" class="tk"/>
<text x="788.39" y="658.6" textLength="9.3" lengthAdjust="spacingAndGlyphs" class="ax">4</text>
<line x1="837.75" y1="642.8" x2="837.75" y2="646.8" class="tk"/>
<text x="817.06" y="658.6" textLength="9.3" lengthAdjust="spacingAndGlyphs" class="ax">5</text>
<line x1="866.43" y1="642.8" x2="866.43" y2="646.8" class="tk"/>
<text x="845.74" y="658.6" textLength="9.3" lengthAdjust="spacingAndGlyphs" class="ax">6</text>
<line x1="895.1" y1="642.8" x2="895.1" y2="646.8" class="tk"/>
<text x="874.41" y="658.6" textLength="9.3" lengthAdjust="spacingAndGlyphs" class="ax">7</text>
<line x1="923.78" y1="642.8" x2="923.78" y2="646.8" class="tk"/>
<text x="903.09" y="658.6" textLength="9.3" lengthAdjust="spacingAndGlyphs" class="ax">8</text>
<line x1="952.45" y1="642.8" x2="952.45" y2="646.8" class="tk"/>
<text x="931.76" y="658.6" textLength="9.3" lengthAdjust="spacingAndGlyphs" class="ax">9</text>
<line x1="981.12" y1="642.8" x2="981.12" y2="646.8" class="tk"/>
<text x="955.79" y="658.6" textLength="18.6" lengthAdjust="spacingAndGlyphs" class="ax">10</text>
<line x1="1009.8" y1="642.8" x2="1009.8" y2="646.8" class="tk"/>
<text x="984.46" y="658.6" textLength="18.6" lengthAdjust="spacingAndGlyphs" class="ax">11</text>
<line x1="1038.48" y1="642.8" x2="1038.48" y2="646.8" class="tk"/>
<text x="1013.14" y="658.6" textLength="18.6" lengthAdjust="spacingAndGlyphs" class="ax">12</text>
<line x1="1067.15" y1="642.8" x2="1067.15" y2="646.8" class="tk"/>
<text x="1041.81" y="658.6" textLength="18.6" lengthAdjust="spacingAndGlyphs" class="ax">13</text>
<line x1="1095.83" y1="642.8" x2="1095.83" y2="646.8" class="tk"/>
<text x="1070.49" y="658.6" textLength="18.6" lengthAdjust="spacingAndGlyphs" class="ax">14</text>
<line x1="1124.5" y1="642.8" x2="1124.5" y2="646.8" class="tk"/>
<text x="1099.16" y="658.6" textLength="18.6" lengthAdjust="spacingAndGlyphs" class="ax">15</text>
<line x1="1153.18" y1="642.8" x2="1153.18" y2="646.8" class="tk"/>
<text x="1127.84" y="658.6" textLength="18.6" lengthAdjust="spacingAndGlyphs" class="ax">16</text>
<line x1="1181.85" y1="642.8" x2="1181.85" y2="646.8" class="tk"/>
<text x="1156.51" y="658.6" textLength="18.6" lengthAdjust="spacingAndGlyphs" class="ax">17</text>
<line x1="1210.53" y1="642.8" x2="1210.53" y2="646.8" class="tk"/>
<text x="1185.19" y="658.6" textLength="18.6" lengthAdjust="spacingAndGlyphs" class="ax">18</text>
<line x1="1239.2" y1="642.8" x2="1239.2" y2="646.8" class="tk"/>
<text x="1213.86" y="658.6" textLength="18.6" lengthAdjust="spacingAndGlyphs" class="ax">19</text>
<line x1="1267.88" y1="642.8" x2="1267.88" y2="646.8" class="tk"/>
<text x="1242.54" y="658.6" textLength="18.6" lengthAdjust="spacingAndGlyphs" class="ax">20</text>
<line x1="1296.55" y1="642.8" x2="1296.55" y2="646.8" class="tk"/>
<text x="1271.21" y="658.6" textLength="18.6" lengthAdjust="spacingAndGlyphs" class="ax">21</text>
<line x1="1325.22" y1="642.8" x2="1325.22" y2="646.8" class="tk"/>
<text x="1299.89" y="658.6" textLength="18.6" lengthAdjust="spacingAndGlyphs" class="ax">22</text>
<line x1="1353.9" y1="642.8" x2="1353.9" y2="646.8" class="tk"/>
<text x="1328.56" y="658.6" textLength="18.6" lengthAdjust="spacingAndGlyphs" class="ax">23</text>
 <text transform="translate(610.6,489.6) rotate(-90) scale(1,1.25)" textLength="70" lengthAdjust="spacingAndGlyphs" style="font-size:11.6px;fill:#6c6c6c;">累计耗电 [ms]</text>
 <text transform="translate(1423.8,525.7) rotate(-90) scale(1,1.12)" textLength="139" lengthAdjust="spacingAndGlyphs" style="font-size:10.6px;fill:#787878;">Get Requests per second</text>
 <rect x="899" y="673" width="14.8" height="10.3" fill="#22B422"/>
 <text x="920.5" y="683.2" textLength="57.1" lengthAdjust="spacingAndGlyphs" class="cc">累计耗电</text>
 <rect x="997.8" y="673.5" width="13.2" height="9.4" fill="#B8354B" stroke="#4A3F9A" stroke-width="1.3"/>
 <text x="1018.8" y="682.4" textLength="98.6" lengthAdjust="spacingAndGlyphs" class="ct">Get requests</text>
</svg>

<!-- ===== status bar ===== -->
<div id="status"><i></i>
 <span style="left:18px;">工作空间名称:</span><span style="left:104.3px;">兴义供水管网天地图</span>
 <span style="left:269.3px;">图层数:</span><span class="v" style="left:316.4px;">17</span>
 <span style="left:342.7px;">经度:</span><span class="v" style="left:377.2px;">104.453366°</span>
 <span style="left:485.6px;">纬度:</span><span class="v" style="left:520.1px;">25.306879°</span>
 <span style="left:620.6px;">比例尺:</span><span class="v" style="left:668.1px;">1:523286</span>
 <span class="v" style="left:752.8px;letter-spacing:0.6px;">EPSG:4326</span>
 <span style="left:850.9px;">缩放级别:</span><span class="v" style="left:911.6px;">10</span>
</div>
<svg width="1474" height="728" viewBox="0 0 1474 728"><path d="M1468.6,728 L1469.7,721.5 L1470,721.5 V728 Z" fill="#222"/></svg>
</div>
</body>
</html>
